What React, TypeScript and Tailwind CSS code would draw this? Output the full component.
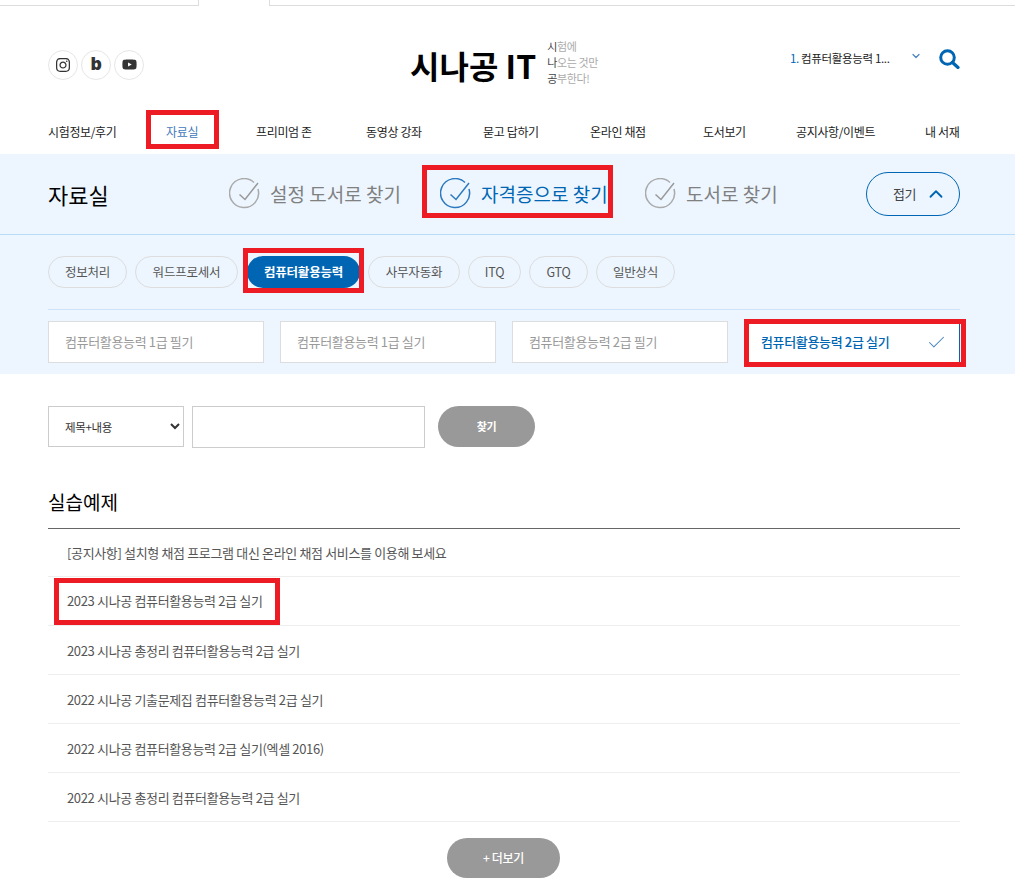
import React from "react";
import { ChevronDown, ChevronUp, Check } from "lucide-react";
import { FaInstagram, FaYoutube } from "react-icons/fa";

const font = "font-['Noto_Sans_CJK_KR','Noto_Sans',sans-serif]";

function RedBox({ className }: { className: string }) {
  return <span className={`absolute border-[5px] border-[#ed1c24] pointer-events-none ${className}`} />;
}

function CircleCheck({ color, tick }: { color: string; tick: string }) {
  return (
    <svg width="32" height="32" viewBox="0 0 32 32" fill="none" className="shrink-0">
      <path d="M25 4.5A14.5 14.5 0 1 0 29 11" stroke={color} strokeWidth="1.5" />
      <path d="M10.5 16.5 L16 21.5 L29 5" stroke={tick} strokeWidth="1.5" />
    </svg>
  );
}

const nav: [string, string][] = [
  ["시험정보/후기", "w-[118px]"],
  ["자료실", "w-[90px]"],
  ["프리미엄 존", "w-[110px]"],
  ["동영상 강좌", "w-[117px]"],
  ["묻고 답하기", "w-[107px]"],
  ["온라인 채점", "w-[113px]"],
  ["도서보기", "w-[93px]"],
  ["공지사항/이벤트", "w-[129px]"],
  ["내 서재", "w-[35px]"],
];
const pills: [string, string][] = [
  ["정보처리", "w-[79px]"],
  ["워드프로세서", "w-[103px]"],
  ["컴퓨터활용능력", "w-[113px] ml-[1px]"],
  ["사무자동화", "w-[92px]"],
  ["ITQ", "w-[53px]"],
  ["GTQ", "w-[59px]"],
  ["일반상식", "w-[79px]"],
];
const cards = ["컴퓨터활용능력 1급 필기", "컴퓨터활용능력 1급 실기", "컴퓨터활용능력 2급 필기", "컴퓨터활용능력 2급 실기"];
const rows = [
  "[공지사항] 설치형 채점 프로그램 대신 온라인 채점 서비스를 이용해 보세요",
  "2023 시나공 컴퓨터활용능력 2급 실기",
  "2023 시나공 총정리 컴퓨터활용능력 2급 실기",
  "2022 시나공 기출문제집 컴퓨터활용능력 2급 실기",
  "2022 시나공 컴퓨터활용능력 2급 실기(엑셀 2016)",
  "2022 시나공 총정리 컴퓨터활용능력 2급 실기",
];

export default function App() {
  return (
    <div className={`${font} w-[1015px] h-[896px] overflow-hidden bg-white text-[#222] tracking-[-0.35px]`}>
      {/* top tab strip */}
      <div className="flex h-[6px]">
        <div className="w-[199px] border-b-[1px] border-r-[1px] border-[#dddddd]" />
        <div className="w-[70px]" />
        <div className="flex-1 border-b-[1px] border-l-[1px] border-[#dddddd]" />
      </div>

      {/* header */}
      <header className="h-[148px] pl-12 pr-[55px]">
        <div className="flex items-center h-[118px] justify-between">
          <div className="flex gap-[3px] w-[340px] mt-[-1px] text-[#333]">
            <span className="w-[30px] h-[30px] rounded-full border border-[#e6e6e6] flex items-center justify-center"><FaInstagram size={16} /></span>
            <span className="w-[30px] h-[30px] rounded-full border border-[#e6e6e6] flex items-center justify-center font-black text-[17px] leading-none font-['Inter',sans-serif]">b</span>
            <span className="w-[30px] h-[30px] rounded-full border border-[#e6e6e6] flex items-center justify-center"><FaYoutube size={15} /></span>
          </div>
          <div className="flex items-center flex-1">
            <div className="ml-[22px] text-[32px] leading-none font-bold text-black tracking-normal">시나공 IT</div>
            <div className="ml-[11px] mt-[-7px] text-[11px] leading-[16px] text-[#aaaaaa]">
              <div><span className="text-[#444]">시</span>험에</div>
              <div><span className="text-[#444]">나</span>오는 것만</div>
              <div><span className="text-[#444]">공</span>부한다!</div>
            </div>
          </div>
          <div className="flex items-center mt-[-13px]">
            <span className="text-[11.5px] text-[#222] w-[120px]"><span className="text-[#0066b3]">1.</span> 컴퓨터활용능력 1...</span>
            <ChevronDown size={12} strokeWidth={2.5} className="text-[#4a86c0] mr-[17px] mt-[-5px]" />
            <svg width="21" height="20" viewBox="0 0 21 20" fill="none" className="text-[#0066b3]">
              <circle cx="8.5" cy="8.5" r="6.8" stroke="currentColor" strokeWidth="3" />
              <path d="M13.5 13.5 L19 18.5" stroke="currentColor" strokeWidth="3.2" strokeLinecap="round" />
            </svg>
          </div>
        </div>
        <nav className="flex text-[12px] leading-[16px] text-[#222]">
          {nav.map(([n, w]) => (
            <span key={n} className={`${w} shrink-0 whitespace-nowrap`}>
              {n === "자료실" ? (
                <span className="relative text-[#3f78bd]">
                  {n}
                  <RedBox className="left-[-20px] top-[-13px] w-[73px] h-[39px]" />
                </span>
              ) : n}
            </span>
          ))}
        </nav>
      </header>

      {/* filter band */}
      <section className="bg-[#edf6ff] h-[220px]">
        <div className="h-[81px] border-b border-[#b9dcfb] pl-12 pr-[55px] flex items-center">
          <h2 className="text-[22px] font-normal text-black w-[181px] tracking-normal">자료실</h2>
          <div className="flex items-center gap-[9px] text-[19px] text-[#808080] w-[193px] tracking-normal">
            <CircleCheck color="#aaaaaa" tick="#999999" /> <span className="whitespace-nowrap">설정 도서로 찾기</span>
          </div>
          <div className="relative flex items-center gap-[9px] text-[19px] text-[#0066b3] ml-[18px] w-[205px] tracking-normal">
            <CircleCheck color="#2c79bd" tick="#2c79bd" /> <span className="whitespace-nowrap">자격증으로 찾기</span>
            <RedBox className="left-[-18px] top-[-13px] w-[191px] h-[53px]" />
          </div>
          <div className="flex items-center gap-[9px] text-[19px] text-[#808080] w-[165px] tracking-normal">
            <CircleCheck color="#aaaaaa" tick="#999999" /> <span className="whitespace-nowrap">도서로 찾기</span>
          </div>
          <div className="ml-auto w-[94px] h-[44px] rounded-full border border-[#0066b3] flex items-center pl-[26px] gap-[9px] text-[13px] text-[#444]">
            접기 <ChevronUp size={22} strokeWidth={2} className="text-[#0066b3]" />
          </div>
        </div>
        <div className="ml-12 mr-[55px] pt-[21px]">
          <div className="flex gap-2 pb-[21px] border-b border-[#cfe3f8]">
            {pills.map(([p, w]) => {
              const on = p === "컴퓨터활용능력";
              return (
                <span key={p} className={`relative ${w} h-[32px] rounded-full flex items-center justify-center text-[12.5px] tracking-[-0.2px] ${on ? "bg-[#0066b3] text-white font-bold" : "border border-[#dddddd] text-[#555]"}`}>
                  {p}
                  {on && <RedBox className="left-[-4px] top-[-8px] w-[121px] h-[45px]" />}
                </span>
              );
            })}
          </div>
          <div className="grid grid-cols-4 gap-4 mt-[11px]">
            {cards.map((c, i) => (
              <div key={c} className={`relative h-[42px] bg-white border flex items-center justify-between px-4 text-[13px] ${i === 3 ? "border-[#0066b3] text-[#0066b3] font-medium" : "border-[#dddddd] text-[#999999]"}`}>
                {c}
                {i === 3 && <Check size={21} strokeWidth={1.2} className="text-[#4a86c0] mr-[-4px]" />}
                {i === 3 && <RedBox className="left-[-1px] top-[-3px] w-[222px] h-[48px]" />}
              </div>
            ))}
          </div>
        </div>
      </section>

      {/* search */}
      <div className="pl-12 pr-[55px] pt-8 flex items-start">
        <select defaultValue="제목+내용" className={`${font} w-[136px] h-[41px] border border-[#cccccc] pl-3 pr-1 text-[11.5px] text-[#333] bg-white`}>
          <option>제목+내용</option>
        </select>
        <input className="ml-2 w-[233px] h-[42px] border border-[#cccccc]" />
        <button className="ml-[13px] w-[97px] h-[41px] rounded-full bg-[#999999] text-white text-[11px] font-bold">찾기</button>
      </div>

      {/* list */}
      <div className="pl-12 pr-[55px] mt-[40px]">
        <h3 className="text-[19px] leading-[28px] text-black font-normal pb-[12px] border-b border-[#666666] tracking-normal">실습예제</h3>
        <ul>
          {rows.map((r, i) => (
            <li key={r} className={`${i === 0 ? "h-[48px]" : "h-[49px]"} ${i >= 2 ? "pt-[1px]" : ""} border-b border-[#eeeeee] flex items-center pl-[19px] text-[13px] text-[#555555]`}>
              <span className="relative">
                {r}
                {i === 1 && <RedBox className="left-[-13px] top-[-13px] w-[226px] h-[47px]" />}
              </span>
            </li>
          ))}
        </ul>
        <div className="flex justify-center mt-4">
          <button className="w-[113px] h-[40px] mr-[1px] rounded-full bg-[#999999] text-white text-[12px] font-medium">+ 더보기</button>
        </div>
      </div>
    </div>
  );
}
